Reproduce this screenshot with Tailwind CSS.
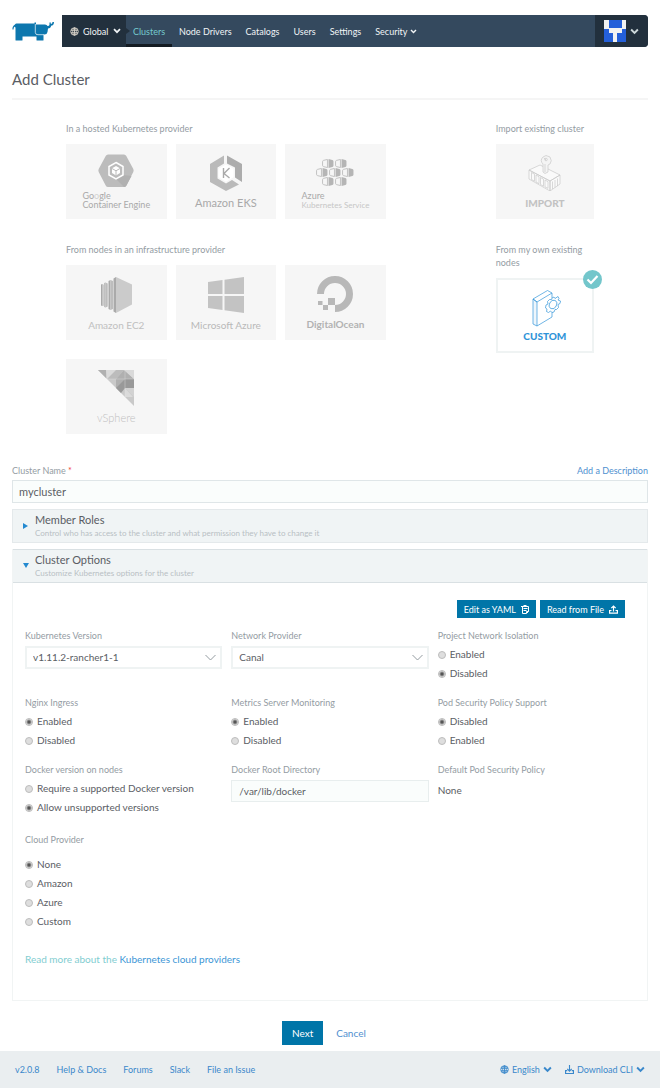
<!DOCTYPE html>
<html lang="en">
<head>
<meta charset="utf-8">
<title>Add Cluster</title>
<script src="https://cdn.jsdelivr.net/npm/@tailwindcss/browser@4"></script>
</head>
<body class="bg-white font-['Lato','Noto_Sans',sans-serif] text-[10px] leading-[13px] text-[#5a5d64]">
<svg class="hidden">
  <symbol id="chev" viewBox="0 0 8 6"><path d="M1 1.2 4 4.2 7 1.2" fill="none" stroke="currentColor" stroke-width="1.7"/></symbol>
  <symbol id="globe" viewBox="0 0 10 10"><g fill="none" stroke="currentColor" stroke-width="1"><circle cx="5" cy="5" r="4.2"/><ellipse cx="5" cy="5" rx="2" ry="4.2"/><path d="M1 3.6h8M1 6.4h8M5 1v8"/></g></symbol>
  <symbol id="cell" viewBox="0 0 11 10" preserveAspectRatio="none"><path d="M5 .5 1.500 1.500Q.5 1.800.5 3v4q0 1.200 1 1.500L5 9.500Z" fill="none" stroke="#bdbdbd" stroke-width=".9"/><path d="M6 0 9.500 1.200Q10.500 1.500 10.500 2.500v5q0 1-1 1.300L6 10Z" fill="#b5b5b5"/></symbol>
</svg>

<header class="flex items-center pt-[15px] px-3">
  <a href="#" aria-label="Rancher" class="w-[50px] shrink-0 flex items-center">
    <svg class="w-[42px] h-[19px]" viewBox="0 0 42 19"><path fill="#0d77ae" d="M3 2.500Q3.500 1.500 4.500 1.500H22.500V0.500H24V2.500H33Q35 2.500 35.500 4Q37.500 4 37.500 2.500V0.500H38.800V2Q40.500 2 40.500 0H42Q42 3.500 39 3.800V4.500Q38.500 6.500 36 6.500L35.500 10Q35 12.500 32.500 12.500H31.500V18Q31.500 18.500 31 18.500H25Q24.500 18.500 24.500 18V14.500H10.500V18Q10.500 18.500 10 18.500H4Q3.500 18.500 3.500 18V6Q3.300 4.500 2.500 4.700Q1.500 5.500 1.500 7.500H.5Q0 4.500 3 2.500Z"/><path d="M23.300 2V10.500Q23.500 13 26 12.700H32" fill="none" stroke="#fff" stroke-width=".7"/></svg>
  </a>
  <nav class="flex flex-1 h-8 bg-[#34495e] text-[9px] text-[#f1f4f6] rounded-r-sm overflow-hidden">
    <button type="button" class="flex items-center w-16 pl-2 gap-1 bg-[#22303d]"><svg class="size-[9px] text-[#d8d3c8]"><use href="#globe"/></svg>Global<svg class="w-2 h-[6px] ml-px"><use href="#chev"/></svg></button>
    <a href="#" class="relative flex items-center w-[46px] justify-center text-[#75cacd] border-y-[3px] border-t-transparent border-b-[#141b22]"><svg class="absolute left-0 w-1 h-[6px]" viewBox="0 0 4 6"><path d="M0 0 4 3 0 6Z" fill="#22303d"/></svg>Clusters</a>
    <a href="#" class="flex items-center px-[7px]">Node Drivers</a>
    <a href="#" class="flex items-center px-[7px]">Catalogs</a>
    <a href="#" class="flex items-center px-[7px]">Users</a>
    <a href="#" class="flex items-center px-[7px]">Settings</a>
    <button type="button" class="flex items-center px-[7px] gap-[3px]">Security<svg class="w-[7px] h-[5px]"><use href="#chev"/></svg></button>
    <button type="button" aria-label="Account" class="ml-auto flex items-center w-[53px] pl-[9px] gap-1 bg-[#22303d] text-[#cbd6d8]">
      <svg class="size-[22px]" viewBox="0 0 22 22"><path fill="#f2f2f2" d="M0 0h22v22H0z"/><path fill="#245fd9" d="M5 0h13v8H5zM0 9h5v4h4v9H0zM18 9h4v13h-9v-9h5z"/></svg>
      <svg class="w-[9px] h-[7px]"><use href="#chev"/></svg>
    </button>
  </nav>
</header>

<main class="px-3">
  <h1 class="mt-[22px] pb-[9px] text-[15px] leading-5 border-b-2 border-[#f5f5f5]">Add Cluster</h1>

  <section class="mt-[22px] mx-[54px] grid grid-cols-[319fr_98fr] gap-x-[110px] gap-y-6 text-[9px] text-[#949ca3]">
    <div>
      <h2 class="mb-[9px]">In a hosted Kubernetes provider</h2>
      <div class="grid grid-cols-3 gap-[9px] text-[#a9a9a9]">
        <button type="button" class="h-[75px] pt-[10px] flex flex-col items-center bg-[#f6f6f6]">
          <svg class="w-9 h-9 shrink-0" viewBox="0 0 36 36"><path fill="#bcbcbc" d="M10 .5h16q1.500 0 2.300 1.500l7 13q.7 1.500 0 3l-7 13.500q-.8 1.500-2.300 1.500H10q-1.500 0-2.300-1.500l-7-13.500q-.7-1.500 0-3l7-13Q8.500.5 10 .5Z"/><path fill="#b1b1b1" d="m18 25 7-4 8.500 1-5 9.500q-.8 1.500-2.500 1.500Z"/><path fill="none" stroke="#fff" stroke-width="1.500" d="m18 8.500 7 4v8.500l-7 4-7-4v-8.500Z"/><path fill="#fff" d="m18 12 4 2.300v4.700L18 21.400l-4-2.400v-4.700Z"/><path d="m14 14.500 4 2.300 4-2.300M18 16.800v5" fill="none" stroke="#bcbcbc"/></svg>
          <span class="mt-px leading-[9px] text-left">Go<span class="text-[#d2d2d2]">o</span>gle<br>Container Engine</span>
        </button>
        <button type="button" class="h-[75px] pt-[11px] flex flex-col items-center bg-[#f6f6f6] text-[11px]">
          <svg class="w-9 h-9 shrink-0" viewBox="0 0 36 36"><path fill="#bababa" d="M16 .5v8L9.500 12.500v11L18 28.500l6-3.500 7 4.500L18 36 2 27V9Z"/><path fill="#acacac" d="M19 .5 34 9v18l-7-4.500v-10L19 8.500Z"/><path fill="#fff" d="m18 9.500 7.500 4.300v8.500L18 26.800l-7.500-4.500v-8.500Z"/><path d="M15.500 13v10M21.500 13l-5.500 5.500 5.500 4.500" fill="none" stroke="#aaa" stroke-width="1.400"/></svg>
          <span class="mt-1 leading-4">Amazon EKS</span>
        </button>
        <button type="button" class="h-[75px] pt-[10px] flex flex-col items-center bg-[#f6f6f6]">
          <svg class="w-[38px] h-9 shrink-0" viewBox="0 0 38 36"><use href="#cell" x="6" y="5" width="12" height="9"/><use href="#cell" x="19" y="5" width="12" height="9"/><use href="#cell" x="0" y="14" width="12" height="9"/><use href="#cell" x="13" y="14" width="12" height="9"/><use href="#cell" x="26" y="14" width="12" height="9"/><use href="#cell" x="6" y="23" width="12" height="9"/><use href="#cell" x="19" y="23" width="12" height="9"/></svg>
          <span class="mt-px leading-[9px] text-left">Azure<br><span class="text-[8px] text-[#c6c6c6]">Kubernetes Service</span></span>
        </button>
      </div>
    </div>
    <div>
      <h2 class="mb-[9px] whitespace-nowrap">Import existing cluster</h2>
      <button type="button" class="w-full h-[75px] pt-[11px] flex flex-col items-center bg-[#f6f6f6] text-[10px] font-black text-[#c2c2c2]">
        <svg class="w-9 h-9 shrink-0" viewBox="0 0 36 36" fill="none" stroke="#c8c8c8" stroke-width=".7"><path fill="#fafafa" d="m2 15 11-5 20 10-10 6ZM2 15v9l21 12V26ZM23 26v10l10-7v-9Z"/><path d="m4.500 17.500 3 1.700v7l-3-1.700ZM9 20l3 1.700v7L9 27ZM13.500 22.500l3 1.700v7l-3-1.700ZM18 25l3 1.700v6.600L18 32ZM25.500 26.500V34M28 25v7.500M30.500 23.500V31"/><path fill="#f4f4f4" d="M16 17V9Q12.500 5.500 16 2l3-1.500 4 1.500q2.500 4 0 7l-2 1v7l-3 1.500Z"/><path d="m17 3 2 2M18 9v8"/><circle cx="19" cy="4.500" r="1.300"/></svg>
        <span class="mt-1 leading-4">IMPORT</span>
      </button>
    </div>
    <div>
      <h2 class="mb-[9px]">From nodes in an infrastructure provider</h2>
      <div class="grid grid-cols-3 gap-x-[9px] gap-y-[19px] text-[#c0c0c0]">
        <button type="button" class="h-[75px] pt-3 flex flex-col items-center bg-[#f6f6f6] text-[10px]">
          <svg class="w-[31px] h-9 shrink-0" viewBox="0 0 31 36"><path fill="#cbcbcb" d="m15 0 16 7.500v20L15 36Z"/><path fill="#aaa" d="m15 0-2.500 1.500v33L15 36ZM9.500 3 7.500 4v28l2 1ZM4.500 5.500 3.300 6v24l1.200.5ZM1.200 7 0 7.500v21l1.200.5Z"/><path fill="#bdbdbd" d="M9.500 3 12 4v28l-2.500 1ZM4.500 5.500l2.200 1v23l-2.200 1ZM1.200 7l1.500.7v21L1.200 29Z"/></svg>
          <span class="mt-1 leading-4">Amazon EC2</span>
        </button>
        <button type="button" class="h-[75px] pt-3 flex flex-col items-center bg-[#f6f6f6] text-[10px] text-[#b9b9b9]">
          <svg class="w-9 h-9 shrink-0" viewBox="0 0 36 36"><path fill="#c3c3c3" d="M0 5 14.500 3v14H0ZM16.500 2.800 36 0v17H16.500ZM0 19h14.500v14L0 31ZM16.500 19H36v17l-19.500-2.800Z"/></svg>
          <span class="mt-1 leading-4">Microsoft Azure</span>
        </button>
        <button type="button" class="h-[75px] pt-[11px] flex flex-col items-center bg-[#f6f6f6] text-[10px] font-bold text-[#b2b2b2]">
          <svg class="w-9 h-9 shrink-0" viewBox="0 0 36 36"><path d="M3.500 18A14.500 14.500 0 1 1 18 32.500" fill="none" stroke="#b8b8b8" stroke-width="7"/><path fill="#b8b8b8" d="M11 22h7v7h-7zM6 29h5v5H6zM1 25h4.500v4H1z"/></svg>
          <span class="mt-1 leading-4">DigitalOcean</span>
        </button>
        <button type="button" class="h-[75px] pt-[11px] flex flex-col items-center bg-[#f6f6f6] text-[11px] font-light">
          <svg class="w-9 h-9 shrink-0" viewBox="0 0 36 36"><path fill="#c9c9c9" d="M0 0h36v36Z"/><path fill="#b0b0b0" d="M0 0h8v8ZM18 9l8-9 10 9-9 9H18Z"/><path fill="#dadada" d="M8 0h10v9l-9 0ZM26 0h10v9ZM27 18l8 9H27Z"/><path fill="#bcbcbc" d="m18 0 8 0-8 9ZM9 9 18 0v9Z"/><path fill="#999" d="M27 9h9v9h-9ZM18 18l9-9v9l-4 5Z"/><path fill="#d2d2d2" d="m27 18 9 9v-9Z"/><path d="M27 0v27M9 9h27" stroke="#e0e0e0" stroke-width=".4"/></svg>
          <span class="mt-1 leading-4">vSphere</span>
        </button>
      </div>
    </div>
    <div>
      <h2 class="mb-[9px]">From my own existing nodes</h2>
      <button type="button" class="relative w-full h-[75px] pt-[9px] flex flex-col items-center border-2 border-[#eff3f3] bg-white text-[10px] font-black text-[#2f93d8]">
        <svg class="w-9 h-[38px] shrink-0" viewBox="0 0 36 38" fill="none" stroke="#3497da" stroke-width=".7"><path fill="#eef6fc" d="M6 10 10 13v24l-4-2Z"/><path d="M6 10 20.500 1.500 25 4 10 13ZM10 37l15-9V23M25 4v5"/><path fill="#fff" d="m25 9 2-1 1 1.500 3-2 1 2-1 1.500 2.500 1-.5 2.500-2 1 .5 3-2 2-1.500 0-1 2.500-2 .5-1.500-1.500-2 1.500-2-1 .5-2.500-1.500-1 .5-3 2-1-.5-2.500 2-2 2 0Z"/><ellipse cx="26" cy="15.500" rx="3.500" ry="4.500" transform="rotate(25 26 15.500)"/></svg>
        <span class="mt-px leading-4">CUSTOM</span>
        <svg class="absolute -top-[10px] -right-[10px] size-[19px]" viewBox="0 0 19 19"><circle cx="9.500" cy="9.500" r="9.500" fill="#73c6cb"/><path d="m4.500 9.500 3.500 3.500 6.500-7" fill="none" stroke="#fff" stroke-width="2.200"/></svg>
      </button>
    </div>
  </section>

  <div class="mt-[30px] flex justify-between text-[9px] leading-[13px] text-[#949ca3]">
    <label for="name">Cluster Name <span class="text-[#f0443a]">*</span></label>
    <a href="#" class="text-[#4f90cf]">Add a Description</a>
  </div>
  <input id="name" value="mycluster" class="block mt-[3px] w-full h-[23px] px-[6px] bg-[#fafdfc] border border-[#dfe6e8] text-[11px]">

  <button type="button" class="mt-[6px] w-full h-[34px] px-[10px] pb-px flex items-center gap-[7px] text-left bg-[#f0f4f5] border border-[#e4e9eb]">
    <svg class="w-[5px] h-[6px] shrink-0" viewBox="0 0 5 6"><path d="M0 0 5 3 0 6Z" fill="#2389d0"/></svg>
    <span><span class="block text-[11px] leading-[14px]">Member Roles</span><span class="block text-[8px] leading-3 text-[#b8bfc4]">Control who has access to the cluster and what permission they have to change it</span></span>
  </button>

  <section class="mt-[6px] border border-[#f1f4f4]">
    <button type="button" class="-mt-px w-full h-[34px] px-[10px] pb-px flex items-center gap-[6px] text-left bg-[#f0f4f5] border-y border-[#d9e0e3]">
      <svg class="w-[6px] h-[5px] shrink-0" viewBox="0 0 6 5"><path d="M0 0h6L3 5Z" fill="#2389d0"/></svg>
      <span><span class="block text-[11px] leading-[14px]">Cluster Options</span><span class="block text-[8px] leading-3 text-[#b8bfc4]">Customize Kubernetes options for the cluster</span></span>
    </button>
    <div class="px-3 pt-[17px] pb-[34px]">
      <div class="flex justify-end gap-1 pr-[10px] text-[9px] text-white">
        <button type="button" class="h-[18px] px-[7px] flex items-center gap-[5px] bg-[#0075a8]">Edit as YAML <svg class="w-2 h-[9px]" viewBox="0 0 8 9" fill="none" stroke="currentColor"><path d="M0 1.500h7.500v5L5.500 8.500h-4V1.500M2.500 .5h3M2.500 3.500h4M2.500 5.500h3M5.500 8V6.500h2"/></svg></button>
        <button type="button" class="h-[18px] px-[7px] flex items-center gap-[5px] bg-[#0075a8]">Read from File <svg class="size-[9px]" viewBox="0 0 9 9" fill="none" stroke="currentColor" stroke-width="1.200"><path d="M2.500 5.500H.6v2.700h7.800V5.500H6.500M4.500 6.500V1M2.300 3.200 4.500 1l2.200 2.200"/></svg></button>
      </div>

      <div class="mt-[11px] grid grid-cols-3 gap-x-[9px]">
        <div class="h-[67px]">
          <label for="ver" class="block text-[9px] text-[#949ca3]">Kubernetes Version</label>
          <div class="relative mt-1"><select id="ver" class="block appearance-none w-full h-[23px] px-[6px] border-2 border-[#eff3f3] bg-white text-[10px]"><option>v1.11.2-rancher1-1</option></select><svg class="absolute right-[6px] top-2 w-[11px] h-[7px] pointer-events-none" viewBox="0 0 11 7"><path d="m.5 1 5 5 5-5" fill="none" stroke="#939ba0"/></svg></div>
        </div>
        <div class="h-[67px]">
          <label for="net" class="block text-[9px] text-[#949ca3]">Network Provider</label>
          <div class="relative mt-1"><select id="net" class="block appearance-none w-full h-[23px] px-[6px] border-2 border-[#eff3f3] bg-white text-[10px]"><option>Canal</option></select><svg class="absolute right-[6px] top-2 w-[11px] h-[7px] pointer-events-none" viewBox="0 0 11 7"><path d="m.5 1 5 5 5-5" fill="none" stroke="#939ba0"/></svg></div>
        </div>
        <fieldset class="h-[67px]">
          <legend class="text-[9px] text-[#949ca3]">Project Network Isolation</legend>
          <label class="mt-[6px] flex items-center gap-1"><input type="radio" name="iso" class="appearance-none size-2 rounded-full border border-[#bdbdbd] bg-[#dedede] checked:bg-[radial-gradient(circle,#555_0_1px,#dedede_3px)]">Enabled</label>
          <label class="mt-[6px] flex items-center gap-1"><input type="radio" name="iso" checked class="appearance-none size-2 rounded-full border border-[#bdbdbd] bg-[#dedede] checked:bg-[radial-gradient(circle,#555_0_1px,#dedede_3px)]">Disabled</label>
        </fieldset>
        <fieldset class="h-[67px]">
          <legend class="text-[9px] text-[#949ca3]">Nginx Ingress</legend>
          <label class="mt-[6px] flex items-center gap-1"><input type="radio" name="ngx" checked class="appearance-none size-2 rounded-full border border-[#bdbdbd] bg-[#dedede] checked:bg-[radial-gradient(circle,#555_0_1px,#dedede_3px)]">Enabled</label>
          <label class="mt-[6px] flex items-center gap-1"><input type="radio" name="ngx" class="appearance-none size-2 rounded-full border border-[#bdbdbd] bg-[#dedede] checked:bg-[radial-gradient(circle,#555_0_1px,#dedede_3px)]">Disabled</label>
        </fieldset>
        <fieldset class="h-[67px]">
          <legend class="text-[9px] text-[#949ca3]">Metrics Server Monitoring</legend>
          <label class="mt-[6px] flex items-center gap-1"><input type="radio" name="met" checked class="appearance-none size-2 rounded-full border border-[#bdbdbd] bg-[#dedede] checked:bg-[radial-gradient(circle,#555_0_1px,#dedede_3px)]">Enabled</label>
          <label class="mt-[6px] flex items-center gap-1"><input type="radio" name="met" class="appearance-none size-2 rounded-full border border-[#bdbdbd] bg-[#dedede] checked:bg-[radial-gradient(circle,#555_0_1px,#dedede_3px)]">Disabled</label>
        </fieldset>
        <fieldset class="h-[67px]">
          <legend class="text-[9px] text-[#949ca3]">Pod Security Policy Support</legend>
          <label class="mt-[6px] flex items-center gap-1"><input type="radio" name="pod" checked class="appearance-none size-2 rounded-full border border-[#bdbdbd] bg-[#dedede] checked:bg-[radial-gradient(circle,#555_0_1px,#dedede_3px)]">Disabled</label>
          <label class="mt-[6px] flex items-center gap-1"><input type="radio" name="pod" class="appearance-none size-2 rounded-full border border-[#bdbdbd] bg-[#dedede] checked:bg-[radial-gradient(circle,#555_0_1px,#dedede_3px)]">Enabled</label>
        </fieldset>
        <fieldset class="h-[70px]">
          <legend class="text-[9px] text-[#949ca3]">Docker version on nodes</legend>
          <label class="mt-[6px] flex items-center gap-1"><input type="radio" name="dock" class="appearance-none size-2 rounded-full border border-[#bdbdbd] bg-[#dedede] checked:bg-[radial-gradient(circle,#555_0_1px,#dedede_3px)]">Require a supported Docker version</label>
          <label class="mt-[6px] flex items-center gap-1"><input type="radio" name="dock" checked class="appearance-none size-2 rounded-full border border-[#bdbdbd] bg-[#dedede] checked:bg-[radial-gradient(circle,#555_0_1px,#dedede_3px)]">Allow unsupported versions</label>
        </fieldset>
        <div class="h-[70px]">
          <label for="root" class="block text-[9px] text-[#949ca3]">Docker Root Directory</label>
          <input id="root" value="/var/lib/docker" class="block mt-1 w-full h-[22px] px-[7px] border border-[#e8eeee] bg-[#fafdfc] text-[10px]">
        </div>
        <div class="h-[70px]">
          <div class="text-[9px] text-[#949ca3]">Default Pod Security Policy</div>
          <div class="mt-2">None</div>
        </div>
      </div>

      <fieldset>
        <legend class="text-[9px] text-[#949ca3]">Cloud Provider</legend>
        <div class="mt-3 flex flex-col gap-[6px]">
          <label class="flex items-center gap-1"><input type="radio" name="cloud" checked class="appearance-none size-2 rounded-full border border-[#bdbdbd] bg-[#dedede] checked:bg-[radial-gradient(circle,#555_0_1px,#dedede_3px)]">None</label>
          <label class="flex items-center gap-1"><input type="radio" name="cloud" class="appearance-none size-2 rounded-full border border-[#bdbdbd] bg-[#dedede] checked:bg-[radial-gradient(circle,#555_0_1px,#dedede_3px)]">Amazon</label>
          <label class="flex items-center gap-1"><input type="radio" name="cloud" class="appearance-none size-2 rounded-full border border-[#bdbdbd] bg-[#dedede] checked:bg-[radial-gradient(circle,#555_0_1px,#dedede_3px)]">Azure</label>
          <label class="flex items-center gap-1"><input type="radio" name="cloud" class="appearance-none size-2 rounded-full border border-[#bdbdbd] bg-[#dedede] checked:bg-[radial-gradient(circle,#555_0_1px,#dedede_3px)]">Custom</label>
        </div>
      </fieldset>
      <p class="mt-[25px] text-[#82cdd1]">Read more about the <a href="#" class="text-[#3c96d6]">Kubernetes cloud providers</a></p>
    </div>
  </section>

  <div class="mt-5 mb-[6px] flex justify-center items-center gap-[13px] pr-3">
    <button type="button" class="w-[41px] h-6 bg-[#0075a8] text-white">Next</button>
    <a href="#" class="text-[#4f90cf]">Cancel</a>
  </div>
</main>

<footer class="h-[37px] px-[15px] pb-px flex items-center gap-[17px] bg-[#eaeef0] text-[9px] text-[#3a88cb]">
  <a href="#">v2.0.8</a><a href="#">Help &amp; Docs</a><a href="#">Forums</a><a href="#">Slack</a><a href="#">File an Issue</a>
  <button type="button" class="ml-auto flex items-center gap-[3px]"><svg class="size-[9px]"><use href="#globe"/></svg>English<svg class="w-[9px] h-[7px]"><use href="#chev"/></svg></button>
  <button type="button" class="-ml-1 flex items-center gap-[3px]"><svg class="size-[9px]" viewBox="0 0 8 8" fill="none" stroke="currentColor"><path d="M2 5H.5v2.500h7V5H6M4 0v5M2 3.500l2 2 2-2"/></svg>Download CLI<svg class="w-[9px] h-[7px]"><use href="#chev"/></svg></button>
</footer>
</body>
</html>
